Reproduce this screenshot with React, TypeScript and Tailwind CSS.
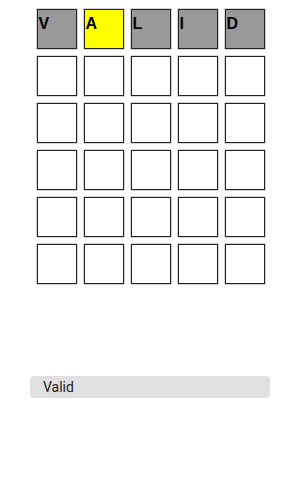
import React from "react";

const rows: { ch: string; bg: string }[][] = [
  [
    { ch: "V", bg: "bg-[#999999]" },
    { ch: "A", bg: "bg-[#ffff00]" },
    { ch: "L", bg: "bg-[#999999]" },
    { ch: "I", bg: "bg-[#999999]" },
    { ch: "D", bg: "bg-[#999999]" },
  ],
];
for (let r = 0; r < 5; r++) {
  rows.push(Array.from({ length: 5 }, () => ({ ch: "", bg: "bg-white" })));
}

export default function App() {
  return (
    <div className="w-[300px] h-[480px] bg-white flex flex-col items-center">
      <div className="mt-[9px] ml-[1px] grid grid-cols-5 gap-[7px]">
        {rows.flat().map((c, i) => (
          <div
            key={i}
            className={`w-[40px] h-[40px] border border-[#222] shadow-[0_0_0_0.5px_#aaa] ${c.bg} pl-[1px] pt-[4px] text-[16px] leading-[20px] font-bold text-black font-['Liberation_Sans',Arial,sans-serif]`}
          >
            {c.ch}
          </div>
        ))}
      </div>
      <div className="mt-[92px] w-[240px] h-[22px] rounded-[4px] bg-[#e0e0e0] flex items-center pl-[13px] text-[14px] text-[#222] font-['Roboto',sans-serif]">
        Valid
      </div>
    </div>
  );
}
